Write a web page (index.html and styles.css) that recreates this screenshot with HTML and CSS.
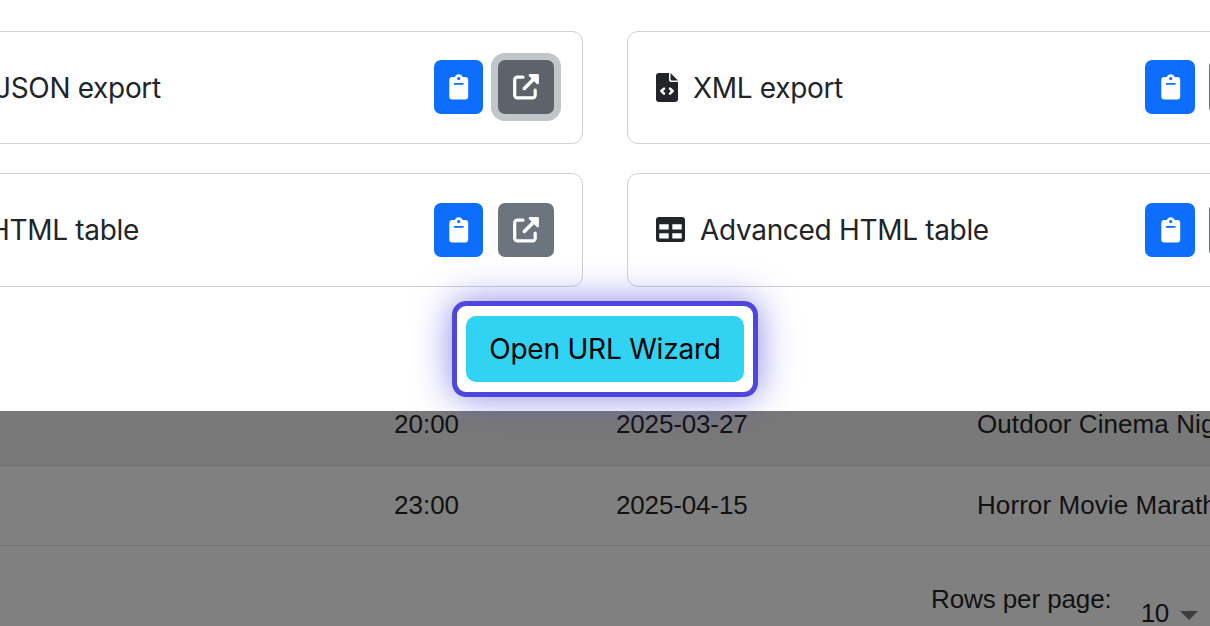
FILE: index.html
```html
<!DOCTYPE html>
<html lang="en">
<head>
  <meta charset="UTF-8">
  <meta name="viewport" content="width=device-width, initial-scale=1.0">
  <title>Export</title>
  <link rel="stylesheet" href="styles.css">
</head>
<body>
  <!-- Shared icons -->
  <svg class="sprite" width="0" height="0">
    <symbol id="clipboard" viewBox="0 0 20 26">
      <path fill-rule="evenodd" d="M3.500 3h2.500a3.900 3.900 0 0 1 7.500 0H16.200a3 3 0 0 1 3 3v16.500a3 3 0 0 1-3 3H3.300a3 3 0 0 1-3-3V6a3 3 0 0 1 3.200-3zM9.750 3a1.600 1.600 0 1 0 0 3.200 1.600 1.600 0 0 0 0-3.200zM5.700 9a.9.9 0 0 0 0 1.800h8.100a.9.9 0 0 0 0-1.800z"/>
    </symbol>
    <symbol id="open" viewBox="0 0 26 26">
      <path d="M10 3.200H4.300a2.600 2.600 0 0 0-2.600 2.600v15.400a2.600 2.600 0 0 0 2.600 2.600h15.300a2.600 2.600 0 0 0 2.600-2.600v-5.200" fill="none" stroke="currentColor" stroke-width="3.200" stroke-linecap="round"/>
      <path d="M11.300 14.500L22 3.800" fill="none" stroke="currentColor" stroke-width="3.500" stroke-linecap="round"/>
      <path d="M17 0h7.600a1.300 1.300 0 0 1 1.300 1.300v7.800c0 1.200-1.300 1.600-2.100.8L16 2.100C15.200 1.300 15.700 0 17 0z"/>
    </symbol>
  </svg>

  <div class="modal">
    <div class="cards">
      <div class="card card-top">
        <svg class="icon icon-braces" viewBox="0 0 35 29"><path d="M12 2H9a4 4 0 0 0-4 4v4l-3 4.500L5 19v4a4 4 0 0 0 4 4h3M23 2h3a4 4 0 0 1 4 4v4l3 4.500L30 19v4a4 4 0 0 1-4 4h-3" fill="none" stroke="currentColor" stroke-width="3"/></svg>
        <span class="name">JSON export</span>
        <button class="btn btn-copy"><svg class="clip"><use href="#clipboard"/></svg></button>
        <button class="btn btn-open focused"><svg class="ext"><use href="#open"/></svg></button>
      </div>
      <div class="card card-top">
        <svg class="icon icon-file" viewBox="0 0 22 29">
          <path d="M3 0h10v6.500A2.500 2.500 0 0 0 15.500 9H22v17a3 3 0 0 1-3 3H3a3 3 0 0 1-3-3V3a3 3 0 0 1 3-3zM14.500 0v6a1.500 1.500 0 0 0 1.500 1.500h6z"/>
          <path d="M8 15.600L5.300 18 8 20.600M14 15.600L16.700 18 14 20.600" fill="none" stroke="#fff" stroke-width="2.500" stroke-linecap="round" stroke-linejoin="round"/>
        </svg>
        <span class="name">XML export</span>
        <button class="btn btn-copy btn-wide"><svg class="clip"><use href="#clipboard"/></svg></button>
        <button class="btn btn-open"><svg class="ext"><use href="#open"/></svg></button>
      </div>
      <div class="card">
        <svg class="icon icon-table" viewBox="0 0 29 25"><path fill-rule="evenodd" d="M3 0h23a3 3 0 0 1 3 3v19a3 3 0 0 1-3 3H3a3 3 0 0 1-3-3V3a3 3 0 0 1 3-3zM3.300 7.300v5.300h9.400V7.300zM16.300 7.300v5.300h9.400V7.300zM3.300 16.300v5.300h9.400v-5.300zM16.300 16.300v5.300h9.400v-5.300z"/></svg>
        <span class="name">HTML table</span>
        <button class="btn btn-copy"><svg class="clip"><use href="#clipboard"/></svg></button>
        <button class="btn btn-open"><svg class="ext"><use href="#open"/></svg></button>
      </div>
      <div class="card">
        <svg class="icon icon-table" viewBox="0 0 29 25"><path fill-rule="evenodd" d="M3 0h23a3 3 0 0 1 3 3v19a3 3 0 0 1-3 3H3a3 3 0 0 1-3-3V3a3 3 0 0 1 3-3zM3.300 7.300v5.300h9.400V7.300zM16.300 7.300v5.300h9.400V7.300zM3.300 16.300v5.300h9.400v-5.300zM16.300 16.300v5.300h9.400v-5.300z"/></svg>
        <span class="name">Advanced HTML table</span>
        <button class="btn btn-copy btn-wide"><svg class="clip"><use href="#clipboard"/></svg></button>
        <button class="btn btn-open"><svg class="ext"><use href="#open"/></svg></button>
      </div>
    </div>
    <button class="wizard"><span class="wizard-text">Open URL Wizard</span></button>
  </div>

  <!-- Table behind the modal -->
  <div class="events">
    <div class="row striped"><span>20:00</span><span class="date">2025-03-27</span><span class="title">Outdoor Cinema Night</span></div>
    <div class="row"><span>23:00</span><span class="date">2025-04-15</span><span class="title">Horror Movie Marathon</span></div>
    <div class="pagination">
      <span class="rows-label">Rows per page:</span>
      <span class="rows-value">10</span>
      <svg class="arrow" viewBox="0 0 18 9"><path d="M0 0h18L9 9z"/></svg>
    </div>
  </div>
</body>
</html>
```
FILE: styles.css
```css
* { box-sizing: border-box; }
body {
  margin: 0;
  height: 626px;
  overflow: hidden;
  background: #808080;
  font-family: Inter, "Liberation Sans", sans-serif;
}
.sprite { display: block; }
svg { fill: currentColor; flex-shrink: 0; }

.modal {
  position: relative;
  z-index: 1;
  display: flex;
  flex-direction: column;
  align-items: center;
  height: 411px;
  padding-top: 31px;
  background: #fff;
}
.cards {
  display: grid;
  grid-template-columns: 667px 667px;
  grid-template-rows: 113px 114px;
  gap: 29px 44px;
  align-self: flex-start;
  margin-left: -84px;
}
.card {
  display: flex;
  align-items: center;
  padding: 0 28px;
  border: 1px solid #d0d1d2;
  border-radius: 11px;
  color: #212529;
}
.card-top .btn { margin-bottom: 1px; }
.name {
  flex: 1;
  margin-left: 15px;
  font-size: 28px;
  line-height: 40px;
  letter-spacing: -0.32px;
  white-space: nowrap;
}
.icon-braces { width: 35px; height: 29px; }
.icon-file { width: 22px; height: 29px; }
.icon-table { width: 29px; height: 25px; margin-bottom: 1px; }

.btn {
  display: flex;
  align-items: center;
  justify-content: center;
  height: 54px;
  padding: 0;
  border: none;
  border-radius: 7px;
  color: #fff;
}
.btn-copy { width: 49px; margin-right: 15px; background: #0d6efd; }
.btn-wide { width: 50px; margin-right: 14px; padding-left: 1px; }
.btn-open { width: 56px; background: #6c757d; }
.btn-open.focused { background: #5c636a; box-shadow: 0 0 0 7px #c1c6c9; }
.clip { width: 20px; height: 26px; }
.ext { width: 26px; height: 26px; }

.wizard {
  position: relative;
  width: 278px;
  height: 66px;
  margin-top: 29px;
  padding: 0;
  border: none;
  border-radius: 10px;
  background: #31d2f2;
  color: #000;
  font-family: inherit;
  font-size: 28px;
  letter-spacing: -0.2px;
}
/* highlight ring */
.wizard::before {
  content: "";
  position: absolute;
  inset: -15px -14px;
  border: 5px solid #4f46dc;
  border-radius: 14px;
  box-shadow: 0 0 36px rgba(79, 70, 220, 0.65);
}

.events {
  margin-top: -27px;
  font-family: "Liberation Sans", Arial, sans-serif;
  font-size: 26px;
  color: #111;
}
.row {
  display: grid;
  grid-template-columns: 222px 361px 400px;
  align-items: center;
  height: 80px;
  padding-left: 394px;
  border-bottom: 1px solid #717171;
  white-space: nowrap;
}
.date { letter-spacing: -0.15px; }
.title { letter-spacing: 0.08px; }
.striped { height: 82px; background: #797979; }
.pagination { display: flex; align-items: flex-start; padding: 37px 0 0 931px; }
.rows-label { line-height: 32px; letter-spacing: -0.1px; white-space: nowrap; }
.rows-value { margin: 14px 0 0 29px; line-height: 32px; letter-spacing: -0.3px; }
.arrow { width: 18px; height: 9px; margin: 28px 0 0 11px; color: #3d3d3d; }
```
